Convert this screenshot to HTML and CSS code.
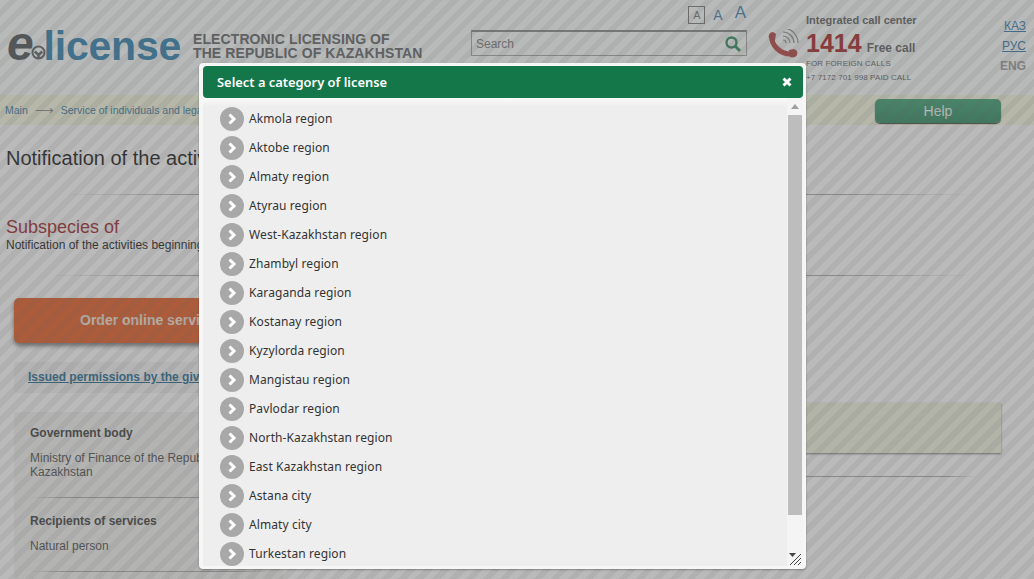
FILE: index.html
```html
<!DOCTYPE html>
<html lang="en">

<head>
  <meta charset="UTF-8">
  <title>E-license</title>
  <link rel="stylesheet" href="styles.css">
</head>

<body>
  <header class="top">
    <a class="logo"><span class="logo-e">e</span><svg class="logo-mark" width="15" height="15" viewBox="0 0 15 15"><circle cx="7.500" cy="7.500" r="6" fill="none" stroke="#5b6265" stroke-width="2"/><path d="M7.500 14V8M3.800 6.500 7.500 10 11.200 6.500" fill="none" stroke="#5b6265" stroke-width="2.500"/></svg><span class="logo-name">license</span></a>
    <div class="slogan">ELECTRONIC LICENSING OF<br>THE REPUBLIC OF KAZAKHSTAN</div>
    <div class="search-col">
      <div class="font-size">
        <span class="fs fs-small">A</span>
        <span class="fs fs-mid">A</span>
        <span class="fs fs-big">A</span>
      </div>
      <div class="search">
        <span>Search</span>
        <svg width="18" height="18" viewBox="0 0 18 18"><circle cx="7.500" cy="7.500" r="5" fill="none" stroke="#2f8a5e" stroke-width="2.400"/><path d="M11.300 11.300 16 16" stroke="#2f8a5e" stroke-width="3"/></svg>
      </div>
    </div>
    <svg class="phone" width="34" height="34" viewBox="0 0 34 34">
      <path d="M15 11a3 3 0 0 1 3 3M15 7a7 7 0 0 1 7 7M15 3a11 11 0 0 1 11 11M15 -1a15 15 0 0 1 15 15" fill="none" stroke="#8f8f8f" stroke-width="1.200"/>
      <path d="M4 7C3 15 11 26 25 25" fill="none" stroke="#b83f3c" stroke-width="5"/>
      <path d="M1 9C0 6 2 3 5 3L8 5 7 11 3 12ZM21 21 26 20C29 21 30 23 29 26 28 28 25 29 22 28Z" fill="#b83f3c"/>
    </svg>
    <div class="call">
      <div class="call-title">Integrated call center</div>
      <div class="call-num"><b>1414</b><span>Free call</span></div>
      <div class="call-small">FOR FOREIGN CALLS</div>
      <div class="call-small">+7 7172 701 998 PAID CALL</div>
    </div>
    <nav class="langs">
      <a>КАЗ</a>
      <a>РУС</a>
      <span>ENG</span>
    </nav>
  </header>

  <div class="crumbs">
    <span>Main</span>
    <span class="crumb-arrow">⟶</span>
    <span>Service of individuals and legal entities</span>
    <a class="help">Help</a>
  </div>

  <main class="content">
    <h1>Notification of the activities beginning</h1>
    <hr class="rule rule-a">
    <h2>Subspecies of</h2>
    <p class="sub">Notification of the activities beginning or termination of activity</p>
    <hr class="rule rule-b">
    <a class="order">Order online service</a>
    <div class="issued"><a>Issued permissions by the given service</a></div>
    <div class="info">
      <div class="info-main">
        <h3>Government body</h3>
        <p>Ministry of Finance of the Republic of Kazakhstan</p>
        <hr class="rule">
        <h3>Recipients of services</h3>
        <p>Natural person</p>
        <hr class="rule">
      </div>
      <div class="info-side">
        <div class="side-box"></div>
        <hr class="rule">
      </div>
    </div>
  </main>

  <div class="overlay"></div>

  <section class="modal">
    <div class="modal-head">
      <span>Select a category of license</span>
      <svg width="10" height="10" viewBox="0 0 10 10"><path d="M1.500 1.500 8.500 8.500M8.500 1.500 1.500 8.500" stroke="#fff" stroke-width="3"/></svg>
    </div>
    <div class="modal-body">
      <ul class="regions" id="regions"></ul>
      <div class="scroll">
        <i class="scroll-up"></i>
        <i class="scroll-thumb"></i>
        <svg class="grip" width="13" height="14" viewBox="0 0 13 14"><path d="M0 1H7L3.500 5Z" fill="#444"/><path d="M1 13 12 2M5 13 12 6M9 13 12 10" stroke="#444" stroke-width="1" fill="none"/></svg>
      </div>
    </div>
  </section>

  <script>
    const regions = ["Akmola region", "Aktobe region", "Almaty region", "Atyrau region", "West-Kazakhstan region",
      "Zhambyl region", "Karaganda region", "Kostanay region", "Kyzylorda region", "Mangistau region",
      "Pavlodar region", "North-Kazakhstan region", "East Kazakhstan region", "Astana city", "Almaty city",
      "Turkestan region"];
    const chevron = '<svg width="24" height="24" viewBox="0 0 24 24"><circle cx="12" cy="12" r="12" fill="#a8a8a8"/><path d="M9.500 7.500 14 12 9.500 16.500" fill="none" stroke="#fff" stroke-width="3"/></svg>';
    document.getElementById("regions").innerHTML = regions
      .map(name => `<li>${chevron}<span>${name}</span></li>`)
      .join("");
  </script>
</body>

</html>
```

FILE: styles.css
```css
html {
  overflow: hidden;
}

body {
  margin: 0;
  height: 579px;
  overflow: hidden;
  background: #fff;
  font-family: "Liberation Sans", Arial, sans-serif;
  color: #222;
}

a {
  cursor: pointer;
}

/* header */
.top {
  display: flex;
  height: 95px;
  background: #fbffff;
}

.logo {
  display: flex;
  align-items: baseline;
  margin: 21px 0 0 7px;
  width: 186px;
  height: 50px;
  font-weight: bold;
  font-size: 41px;
  letter-spacing: -0.2px;
  line-height: 46px;
}

.logo-e {
  font-style: italic;
  font-size: 48px;
  color: #4a5256;
}

.logo-mark {
  margin: 0 -2px -1px -3px;
}

.logo-name {
  color: #2a80b0;
}

.slogan {
  margin-top: 32px;
  width: 278px;
  font-weight: bold;
  font-size: 14px;
  line-height: 14px;
  letter-spacing: 0.1px;
  color: #606264;
}

.search-col {
  width: 276px;
  margin-right: 21px;
}

.font-size {
  display: flex;
  justify-content: flex-end;
  align-items: center;
  gap: 8px;
  height: 30px;
  color: #3e7fac;
}

.fs-small {
  box-sizing: border-box;
  width: 17px;
  height: 18px;
  border: 1px solid #777;
  font-size: 11px;
  line-height: 16px;
  text-align: center;
  color: #777;
}

.fs-mid {
  font-size: 14px;
}

.fs-big {
  font-size: 17px;
  margin: -4px 1px 0 4px;
}

.search {
  display: flex;
  justify-content: space-between;
  align-items: center;
  box-sizing: border-box;
  height: 26px;
  padding: 0 4px;
  border: 1px solid #a4a4a4;
  border-top: 2px solid #888;
  font-size: 12px;
  color: #777;
}

.phone {
  margin-top: 29px;
}

.call {
  margin: 14px 0 0 4px;
  width: 190px;
  font-size: 11px;
  color: #5c5c5c;
}

.call-title {
  font-weight: bold;
  line-height: 13px;
}

.call-num {
  display: flex;
  align-items: baseline;
  gap: 5px;
  margin: 5px 0 -2px;
  font-size: 12px;
  font-weight: bold;
  line-height: 22px;
}

.call-num b {
  font-size: 25px;
  color: #a82020;
}

.call-small {
  font-size: 8px;
  line-height: 14px;
  letter-spacing: 0.1px;
}

.langs {
  display: flex;
  flex-direction: column;
  align-items: flex-end;
  width: 30px;
  gap: 5px;
  margin-top: 19px;
  font-size: 12px;
  line-height: 15px;
}

.langs a {
  color: #2e78ac;
  text-decoration: underline;
}

.langs span {
  font-weight: bold;
  color: #999;
}

/* breadcrumbs */
.crumbs {
  display: flex;
  align-items: center;
  gap: 7px;
  height: 30px;
  padding: 0 33px 0 5px;
  background: #f8fae2;
  font-size: 10.500px;
  color: #2e78a4;
}

.crumb-arrow {
  color: #8a8a8a;
  font-size: 13px;
}

.help {
  margin: 2px 0 0 auto;
  width: 126px;
  height: 24px;
  border-radius: 5px;
  background: linear-gradient(#3aa273, #2a8a5e);
  box-shadow: 0 1px 1px #333;
  font-size: 14px;
  line-height: 25px;
  text-align: center;
  color: #f4faf7;
}

/* page content */
.content {
  padding: 0 33px 0 6px;
}

h1 {
  margin: 0;
  padding-top: 22px;
  font-weight: normal;
  font-size: 20px;
  line-height: 23px;
  color: #111;
}

.rule {
  height: 1px;
  margin: 0;
  border: 0;
  background: linear-gradient(90deg, transparent, #aaa 15%, #aaa 85%, transparent);
}

.rule-a {
  margin: 24px 27px 0 54px;
}

h2 {
  margin: 22px 0 0;
  font-weight: normal;
  font-size: 18px;
  line-height: 21px;
  color: #a02020;
}

.sub {
  margin: 0;
  font-size: 12px;
  line-height: 14px;
  color: #111;
}

.rule-b {
  margin: 23px 27px 0 40px;
}

.order {
  display: block;
  box-sizing: border-box;
  width: 480px;
  height: 45px;
  margin: 22px 0 0 8px;
  padding-left: 66px;
  border-radius: 5px;
  background: #e85a20;
  box-shadow: 0 3px 4px #777;
  font-weight: bold;
  font-size: 14px;
  line-height: 44px;
  color: #f5e5da;
}

.issued {
  width: 600px;
  height: 31px;
  margin: 19px 0 0 8px;
  padding-left: 14px;
  background: #f2f4f2;
  font-weight: bold;
  font-size: 12px;
  line-height: 30px;
  color: #1b6a92;
}

.issued a {
  text-decoration: underline;
}

.info {
  display: flex;
  justify-content: space-between;
  margin: 10px 0 0 8px;
}

.info-main {
  box-sizing: border-box;
  width: 269px;
  margin-top: 9px;
  padding: 14px 14px 0 16px;
  color: #4a4a4a;
  font-size: 12px;
  background: #f2f3f1;
}

.info-main h3 {
  margin: 0;
  font-size: 12px;
  line-height: 14px;
  color: #3a3a3a;
}

.info-main p {
  margin: 11px 0 0;
  line-height: 14px;
}

.info-main .rule {
  margin: 18px 0 16px;
}

.info-side {
  width: 221px;
}

.side-box {
  height: 50px;
  background: #f2f4df;
  box-shadow: 0 1px 2px #777;
}

.info-side .rule {
  margin: 23px 25px 0 0;
}

/* dimmed background */
.overlay {
  position: fixed;
  inset: 0;
  background: repeating-linear-gradient(-45deg, rgba(95, 95, 95, 0.49) 0 6px, rgba(95, 95, 95, 0.43) 6px 12px);
}

/* modal */
.modal {
  position: fixed;
  left: 199px;
  top: 63px;
  display: flex;
  flex-direction: column;
  box-sizing: border-box;
  width: 607px;
  height: 506px;
  padding: 3px 3px 3px 4px;
  border-radius: 4px;
  background: #f6f6f6;
  box-shadow: 0 1px 2px rgba(0, 0, 0, 0.3);
}

.modal-head {
  display: flex;
  justify-content: space-between;
  align-items: center;
  flex: none;
  height: 32px;
  padding: 0 11px 0 14px;
  border-radius: 4px;
  background: #14774a;
  font-family: "Noto Sans", sans-serif;
  font-weight: 600;
  font-size: 12.900px;
  color: #fff;
}

.modal-body {
  display: flex;
  flex: 1;
  min-height: 0;
}

.regions {
  flex: 1;
  margin: 0;
  padding: 6px 0 0 17px;
  list-style: none;
  overflow: hidden;
  background: linear-gradient(#fbfbfb, #eeeeee 8px);
  font-family: "Noto Sans", sans-serif;
  font-size: 12px;
  letter-spacing: 0.1px;
  color: #333;
}

.regions li {
  display: flex;
  align-items: center;
  gap: 5px;
  height: 29px;
}

.regions li span {
  margin-top: -1px;
}

.regions svg {
  flex: none;
}

.scroll {
  position: relative;
  display: flex;
  flex-direction: column;
  align-items: center;
  flex: none;
  width: 16px;
  background: #f4f4f4;
}

.scroll-up {
  flex: none;
  width: 0;
  height: 0;
  margin: 6px 0 6px;
  border: 4px solid transparent;
  border-top: 0;
  border-bottom: 5px solid #a0a0a0;
}

.scroll-thumb {
  width: 14px;
  height: 400px;
  background: #bdbdbd;
}

.grip {
  position: absolute;
  right: 1px;
  bottom: 0;
}
```
